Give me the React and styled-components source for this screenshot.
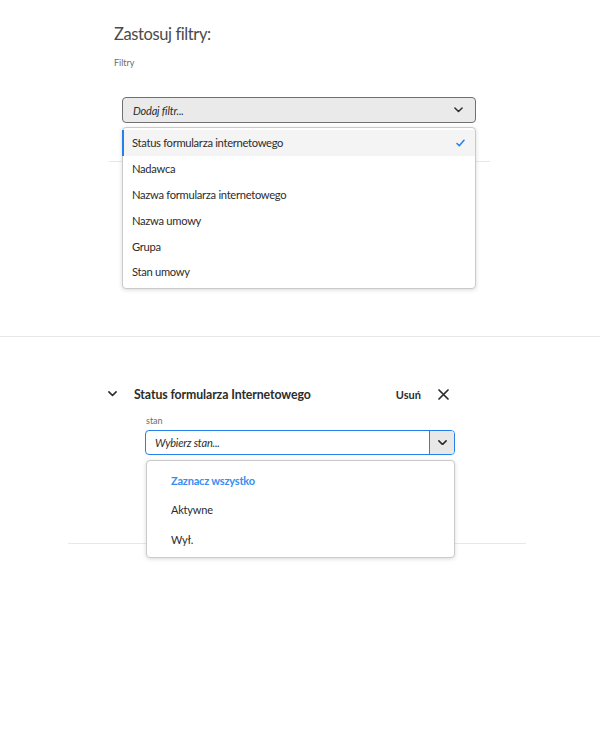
import { createGlobalStyle } from "styled-components";
import styled from "styled-components";

const GlobalStyle = createGlobalStyle`
body {
    margin: 0;
    background: #fff;
    font-family: "Lato", "Noto Sans", sans-serif;
    color: #2c2c2c;
}
`;

const Page = styled.div`
width: 600px;
min-height: 750px;
display: flex;
flex-direction: column;
`;

const TopSection = styled.div`
margin-left: 109px;
width: 381px;
padding-top: 23px;
display: flex;
flex-direction: column;
`;

const Title = styled.h2`
margin: 0 0 0 5px;
font-size: 16.5px;
line-height: 22px;
letter-spacing: -0.4px;
font-weight: 400;
color: #4b4b4b;
`;

const SmallLabel = styled.div`
margin: ${({ $top }) => $top || 0}px 0 0 ${({ $left }) => $left || 0}px;
font-size: 9px;
line-height: 12px;
color: #6e6e6e;
`;

const PickerWrap = styled.div`
position: relative;
margin: ${({ $top }) => $top}px ${({ $right }) => $right}px 0 ${({ $left }) => $left}px;
`;

const PickerButton = styled.div`
height: 26px;
box-sizing: border-box;
display: flex;
align-items: center;
justify-content: space-between;
padding: 0 12px 0 10px;
background: #eaeaea;
border: 1px solid #707070;
border-radius: 4px;
font-size: 11px;
letter-spacing: -0.2px;
font-style: italic;
color: #2c2c2c;
`;

const SelectBox = styled.div`
height: 25px;
box-sizing: border-box;
display: flex;
align-items: stretch;
border: 1px solid #2680eb;
border-radius: 4px;
overflow: hidden;
background: #fff;
`;

const SelectText = styled.div`
flex: 1;
display: flex;
align-items: center;
padding-left: 9px;
font-size: 11px;
letter-spacing: -0.2px;
font-style: italic;
color: #2c2c2c;
`;

const SelectToggle = styled.div`
width: 24px;
display: flex;
align-items: center;
justify-content: center;
background: #e8e8e8;
border-left: 1px solid #2680eb;
`;

const Menu = styled.div`
position: absolute;
left: ${({ $left }) => $left || 0}px;
right: 0;
top: calc(100% + ${({ $gap }) => $gap}px);
box-sizing: border-box;
padding: ${({ $pad }) => $pad};
background: #fff;
border: 1px solid #cacaca;
border-radius: 4px;
box-shadow: 0 1px 4px rgba(0, 0, 0, 0.15);
z-index: 2;
`;

const MenuItem = styled.div`
height: 25.8px;
display: flex;
align-items: center;
justify-content: space-between;
padding: 0 10px 0 8px;
font-size: 11.2px;
letter-spacing: -0.3px;
color: #2c2c2c;
background: ${({ $selected }) => ($selected ? "#f4f4f4" : "transparent")};
border-left: 2px solid ${({ $selected }) => ($selected ? "#2680eb" : "transparent")};
margin-left: -1px;
`;

const OptionItem = styled.div`
height: 29.3px;
display: flex;
align-items: center;
padding-left: 24px;
font-size: 11px;
letter-spacing: -0.2px;
font-weight: ${({ $accent }) => ($accent ? 700 : 400)};
color: ${({ $accent }) => ($accent ? "#378ef0" : "#2c2c2c")};
`;

const Divider = styled.div`
height: 1px;
background: #e8e8e8;
margin: ${({ $top }) => $top}px 0 0 ${({ $left }) => $left || 0}px;
width: ${({ $width }) => ($width ? `${$width}px` : "100%")};
`;

const FilterSection = styled.div`
margin: 47px 0 0 68px;
width: 458px;
display: flex;
flex-direction: column;
`;

const FilterHeader = styled.div`
height: 20px;
display: flex;
align-items: center;
padding: 0 77px 0 40px;
`;

const HeaderTitle = styled.div`
flex: 1;
margin-left: 17px;
font-size: 12.3px;
letter-spacing: -0.1px;
font-weight: 700;
color: #2c2c2c;
`;

const RemoveButton = styled.button`
border: none;
background: none;
padding: 0;
font-family: inherit;
font-size: 11px;
font-weight: 700;
color: #2c2c2c;
cursor: pointer;
`;

const CloseButton = styled.button`
border: none;
background: none;
padding: 0;
margin-left: 17px;
display: flex;
cursor: pointer;
`;

const FieldBlock = styled.div`
margin-left: 77px;
width: 310px;
display: flex;
flex-direction: column;
`;

const Chevron = ({ size = 10, stroke = 1.6 }) => (
    <svg width={size} height={size * 0.6} viewBox="0 0 10 6" fill="none">
        <path d="M1 1l4 4 4-4" stroke="#2c2c2c" strokeWidth={stroke} strokeLinecap="round" strokeLinejoin="round" />
    </svg>
);

const Check = () => (
    <svg width="9" height="8" viewBox="0 0 9 8" fill="none">
        <path d="M1 4.5l2.3 2.3L8 1.2" stroke="#2680eb" strokeWidth="1.5" strokeLinecap="round" strokeLinejoin="round" />
    </svg>
);

const Cross = () => (
    <svg width="11" height="11" viewBox="0 0 11 11" fill="none">
        <path d="M1 1l9 9M10 1l-9 9" stroke="#2c2c2c" strokeWidth="1.7" strokeLinecap="round" />
    </svg>
);

const filters = [
    "Status formularza internetowego",
    "Nadawca",
    "Nazwa formularza internetowego",
    "Nazwa umowy",
    "Grupa",
    "Stan umowy",
];

const states = ["Aktywne", "Wył."];

const App = () => {
    return (
        <Page>
            <GlobalStyle />
            <TopSection>
                <Title>Zastosuj filtry:</Title>
                <SmallLabel $top={12} $left={5}>Filtry</SmallLabel>
                <PickerWrap $top={28} $left={13} $right={14}>
                    <PickerButton>
                        Dodaj filtr...
                        <Chevron size={9} />
                    </PickerButton>
                    <Menu $gap={4} $pad="2px 0 3px">
                        {filters.map((f, i) => (
                            <MenuItem key={f} $selected={i === 0}>
                                {f}
                                {i === 0 && <Check />}
                            </MenuItem>
                        ))}
                    </Menu>
                </PickerWrap>
                <Divider $top={38} />
            </TopSection>

            <Divider $top={174} />

            <FilterSection>
                <FilterHeader>
                    <Chevron size={9} stroke={1.8} />
                    <HeaderTitle>Status formularza Internetowego</HeaderTitle>
                    <RemoveButton>Usuń</RemoveButton>
                    <CloseButton><Cross /></CloseButton>
                </FilterHeader>
                <FieldBlock>
                    <SmallLabel $top={11} $left={1}>stan</SmallLabel>
                    <PickerWrap $top={3} $left={0} $right={0}>
                        <SelectBox>
                            <SelectText>Wybierz stan...</SelectText>
                            <SelectToggle><Chevron size={9} stroke={1.8} /></SelectToggle>
                        </SelectBox>
                        <Menu $gap={5} $left={1} $pad="5px 0 3px">
                            <OptionItem $accent>Zaznacz wszystko</OptionItem>
                            {states.map(s => (
                                <OptionItem key={s}>{s}</OptionItem>
                            ))}
                        </Menu>
                    </PickerWrap>
                </FieldBlock>
                <Divider $top={88} />
            </FilterSection>
        </Page>
    );
};

export default App;
